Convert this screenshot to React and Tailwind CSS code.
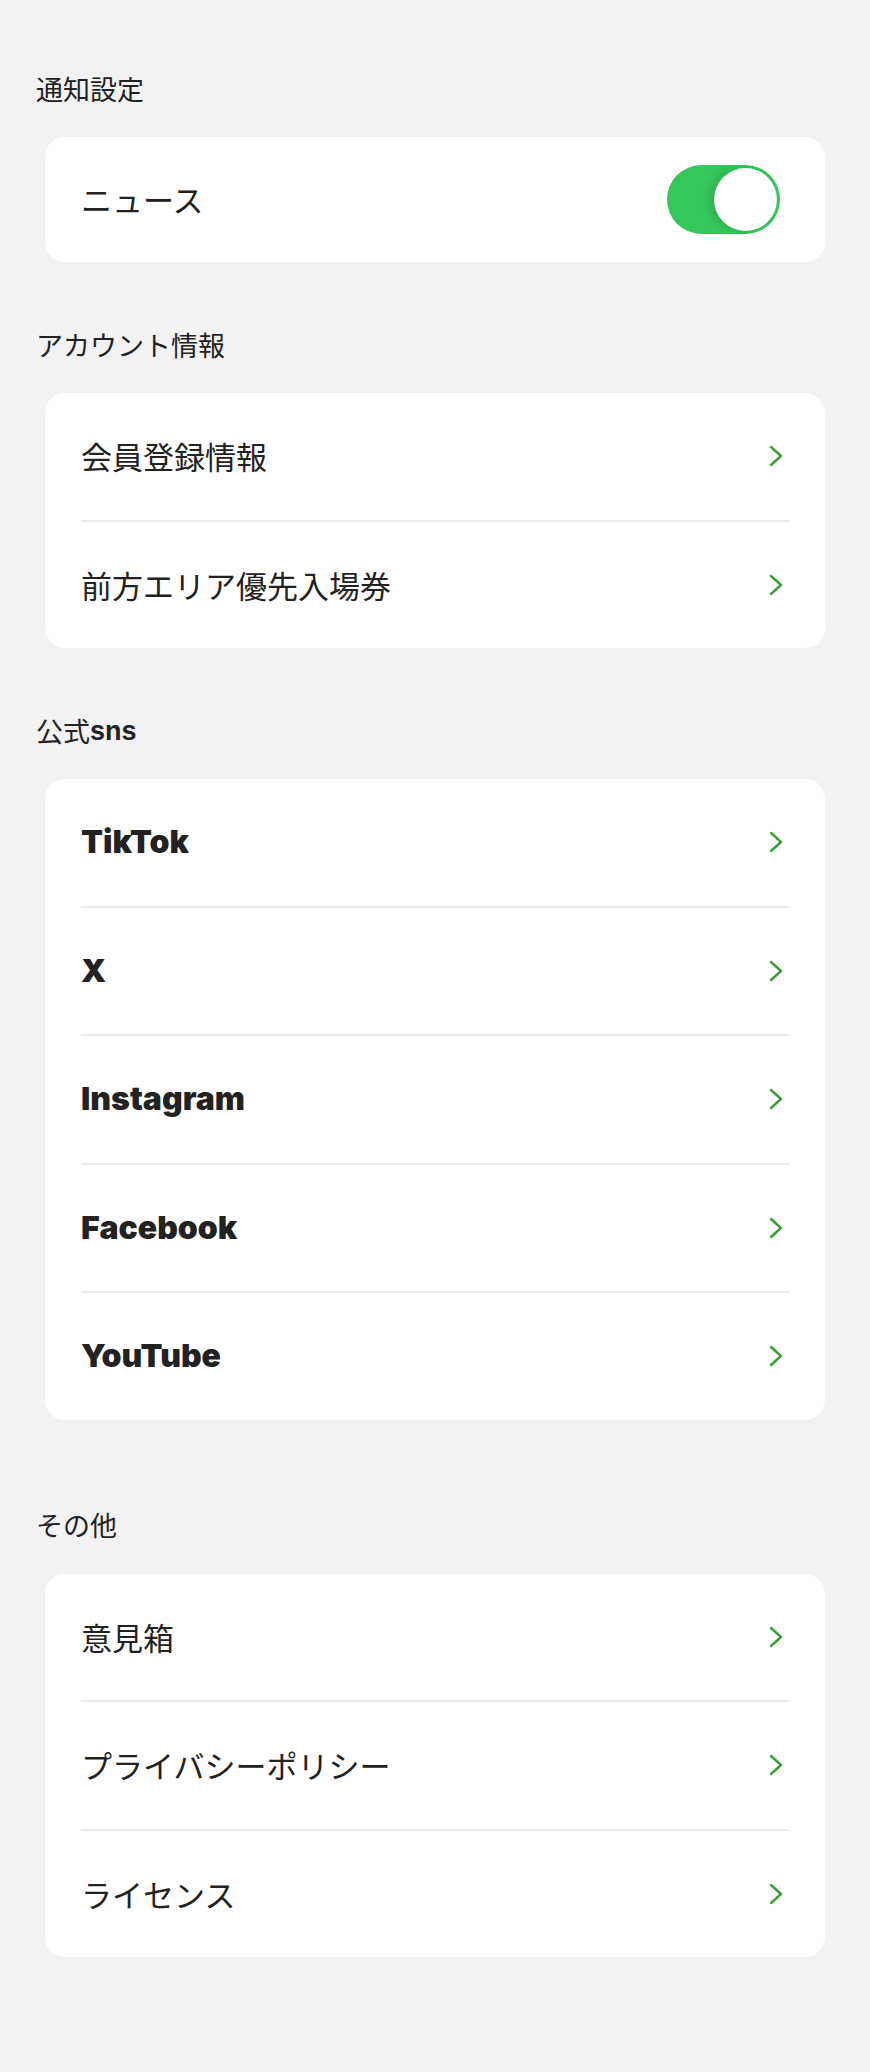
const JP = { fontFamily: '"Noto Sans CJK JP", "Noto Sans", sans-serif' };

const sections = [
  { title: '通知設定', toggle: true },
  { title: 'アカウント情報', items: ['会員登録情報', '前方エリア優先入場券'] },
  { title: '公式', titleLatin: 'sns', items: ['TikTok', 'X', 'Instagram', 'Facebook', 'YouTube'], latin: true },
  { title: 'その他', items: ['意見箱', 'プライバシーポリシー', 'ライセンス'] },
];

function Chevron() {
  return (
    <svg width="14" height="22" viewBox="0 0 14 22" className="shrink-0">
      <polyline points="2,2 12,11 2,20" fill="none" stroke="#3a9d3a" strokeWidth="2.4" strokeLinecap="round" strokeLinejoin="round" />
    </svg>
  );
}

function Toggle() {
  return (
    <div className="w-[113px] h-[69px] rounded-full bg-[#34c759] flex items-center justify-end pr-[3px]">
      <div className="w-[63px] h-[63px] rounded-full bg-white shadow-[-5px_0_8px_rgba(0,0,0,0.12)]" />
    </div>
  );
}

function Header({ title, latin }) {
  return (
    <div className="h-[36px] flex items-center pl-[36px] text-[27px] text-[#222]">
      <span>{title}</span>
      {latin && <span className="font-bold" style={{ fontFamily: '"Liberation Sans", sans-serif' }}>{latin}</span>}
    </div>
  );
}

function Row({ label, latin }) {
  return (
    <div className="h-[126.5px] flex items-center justify-between pl-[36px] pr-[42px]">
      {latin
        ? <span className="text-[32px] font-black text-[#222]" style={{ fontFamily: 'Inter, "Liberation Sans", sans-serif' }}>{label}</span>
        : <span className="text-[31px] text-[#222]">{label}</span>}
      <Chevron />
    </div>
  );
}

export default function App() {
  return (
    <div className="min-h-[2072px] w-full bg-[#f2f2f2] pt-[71px] pb-[113px]" style={JP}>
      {sections.map((s, i) => (
        <section key={s.title} className={i === 0 ? '' : i === 3 ? 'mt-[88px]' : 'mt-[65px]'}>
          <Header title={s.title} latin={s.titleLatin} />
          <div className="mt-[30px] mx-[45px] bg-white rounded-[20px] overflow-hidden">
            {s.toggle ? (
              <div className="h-[125px] flex items-center justify-between pl-[36px] pr-[45px]">
                <span className="text-[31px] text-[#222]">ニュース</span>
                <Toggle />
              </div>
            ) : (
              s.items.map((it, j) => (
                <div key={it}>
                  {j > 0 && <div className="mx-[36px] h-[2px] bg-[#ececec]" />}
                  <Row label={it} latin={s.latin} />
                </div>
              ))
            )}
          </div>
        </section>
      ))}
    </div>
  );
}
